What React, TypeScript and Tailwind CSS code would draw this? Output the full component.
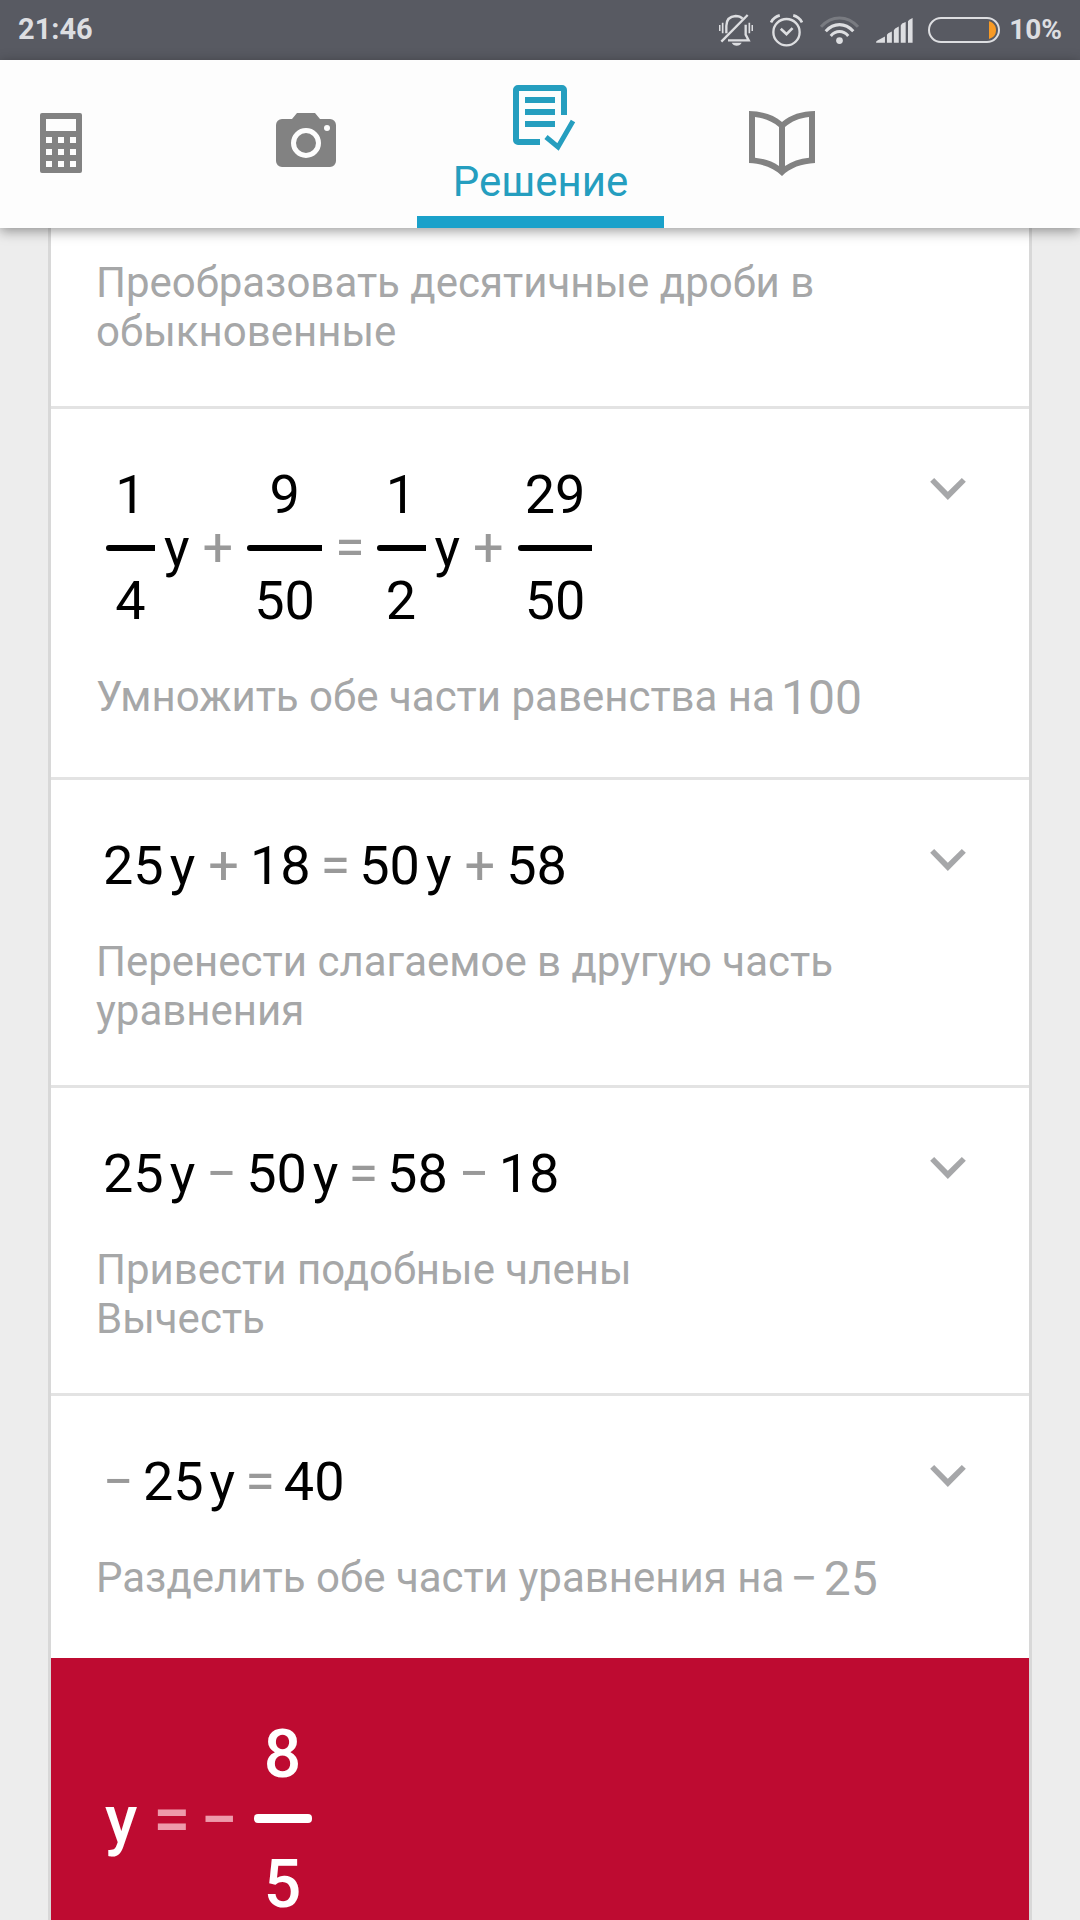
import type { ReactNode } from "react";

const tabs = [
  { id: "calculator", label: "Калькулятор", icon: CalculatorIcon, className: "w-[195px] pl-10" },
  { id: "camera", label: "Камера", icon: CameraIcon, className: "w-[222px] justify-center" },
  { id: "solution", label: "Решение", icon: SolutionIcon, className: "w-[247px] justify-center" },
  { id: "book", label: "Учебник", icon: BookIcon, className: "w-[236px] justify-center" },
];

function BellOffIcon() {
  return (
    <svg viewBox="57 40 102 96" className="h-8 w-[34px]" fill="none" stroke="currentColor" strokeWidth="7" aria-hidden="true">
      <path d="M79 98V76c0-18 10-29 28-30 9 0 16 3 21 8M137 72v30l9 17H84" />
      <path d="M64 123 143 43" strokeWidth="7" />
      <path d="M59 73v18M68 66v32M157 73v18M148 66v32" strokeWidth="5" />
      <path d="M95 126h30c-3 6-8 9-15 9s-12-3-15-9z" fill="currentColor" stroke="none" />
    </svg>
  );
}

function AlarmIcon() {
  return (
    <svg viewBox="209 38 98 98" className="h-[33px] w-[33px]" fill="none" stroke="currentColor" strokeWidth="7" aria-hidden="true">
      <circle cx="258" cy="92" r="39" />
      <path d="m241 82 17 16 18-18" strokeWidth="8" />
      <path d="M212 63c5-10 14-18 26-21M304 63c-5-10-14-18-26-21" strokeWidth="8" />
    </svg>
  );
}

function WifiIcon() {
  return (
    <svg viewBox="359 47 116 83" className="h-7 w-[39px]" fill="none" stroke="currentColor" strokeWidth="9" aria-hidden="true">
      <path d="M362 79c32-35 78-35 110 0" opacity="0.25" />
      <path d="M376 92c24-26 58-26 82 0" />
      <path d="M391 106c15-17 37-17 52 0" />
      <circle cx="417" cy="120" r="10" fill="currentColor" stroke="none" />
    </svg>
  );
}

function SignalIcon() {
  return (
    <svg viewBox="528 54 112 76" className="h-[25px] w-[37px]" fill="currentColor" aria-hidden="true">
      <path d="M528 129c0-5 3-6 7-8l20-11v19zM561 129v-24l4-5 11-5v34zM582 129V91l4-5 11-6v49zM603 129V77l4-6 11-5v63zM625 129V64l4-5 10-5v75z" />
    </svg>
  );
}

function BatteryIcon() {
  return (
    <svg viewBox="684 51 216 78" className="h-[26px] w-[72px]" aria-hidden="true">
      <rect x="687" y="54" width="210" height="72" rx="36" fill="none" stroke="currentColor" strokeWidth="6" />
      <path d="M867 64c14 4 21 14 21 27s-7 22-21 26z" fill="#f79a25" />
    </svg>
  );
}

function CalculatorIcon() {
  return (
    <svg viewBox="0 0 42 60" className="h-[60px] w-[42px]" aria-hidden="true">
      <path
        fill="currentColor"
        fillRule="evenodd"
        d="M2 0h38a2 2 0 0 1 2 2v56a2 2 0 0 1-2 2H2a2 2 0 0 1-2-2V2a2 2 0 0 1 2-2zM6 6v12h30V6zM6 24v6h6v-6zM18 24v6h6v-6zM30 24v6h6v-6zM6 36v6h6v-6zM18 36v6h6v-6zM30 36v6h6v-6zM6 48v6h6v-6zM18 48v6h6v-6zM30 48v6h6v-6z"
      />
    </svg>
  );
}

function CameraIcon() {
  return (
    <svg viewBox="0 0 60 60" className="h-[60px] w-[60px]" aria-hidden="true">
      <path fill="currentColor" d="M6 6h10l5-6h18l5 6h10a6 6 0 0 1 6 6v36a6 6 0 0 1-6 6H6a6 6 0 0 1-6-6V12a6 6 0 0 1 6-6z" />
      <circle cx="30" cy="30" r="12.5" fill="none" stroke="#fdfdfd" strokeWidth="5" />
      <circle cx="51" cy="15" r="3" fill="#fdfdfd" />
    </svg>
  );
}

function SolutionIcon() {
  return (
    <svg viewBox="0 0 55 66" className="h-[66px] w-[55px] overflow-visible" fill="none" stroke="currentColor" strokeWidth="6" aria-hidden="true">
      <path d="M27 57H5a2 2 0 0 1-2-2V5a2 2 0 0 1 2-2h44a2 2 0 0 1 2 2v25" />
      <path d="M12 15h30M12 27h30M12 39h30" />
      <path d="m33 52 12 10 15-26" strokeWidth="5" />
    </svg>
  );
}

function BookIcon() {
  return (
    <svg viewBox="147 330 198 195" className="h-[65px] w-[66px]" aria-hidden="true">
      <path
        fill="currentColor"
        fillRule="evenodd"
        d="M147 330c40 1 74 11 99 33 25-22 59-32 99-33v156c-40 2-74 14-99 39-25-25-59-37-99-39zM165 348v122c28 3 52 11 72 25V378c-20-17-44-27-72-30zM327 348v122c-28 3-52 11-72 25V378c20-17 44-27 72-30z"
      />
    </svg>
  );
}

function ExpandButton() {
  return (
    <button type="button" aria-label="Показать подробности" className="shrink-0 px-[18px] py-[15px] text-[#a6a7a9]">
      <svg viewBox="931 114 107 66" className="h-[22px] w-[36px]" fill="currentColor" aria-hidden="true">
        <path d="m931 125 12-11 41 41 42-41 12 11-54 55z" />
      </svg>
    </button>
  );
}

function Plus() {
  return <span className="mr-[11px] ml-[13px] text-[#999999]">+</span>;
}

function Minus() {
  return <span className="mr-[9px] ml-[11px] text-[#999999] first:ml-0">−</span>;
}

function Equals() {
  return <span className="mr-[9px] ml-[10px] text-[#999999]">=</span>;
}

function Var({ children }: { children: string }) {
  return <span className="ml-1.5">{children}</span>;
}

function Fraction({ top, bottom }: { top: string; bottom: string }) {
  return (
    <span className="mx-[3px] flex min-w-[49px] flex-col items-stretch text-center">
      <span className="px-[7px]">{top}</span>
      <span className="my-[18px] h-[6px] rounded-l-sm bg-black" />
      <span className="px-[7px]">{bottom}</span>
    </span>
  );
}

function Step({ equation, children }: { equation: ReactNode; children: ReactNode }) {
  return (
    <li className="border-t-[3px] border-[#e3e3e3] px-[45px] pt-[54px] pb-[50px]">
      <div className="mb-[39px] flex items-start justify-between">
        <div className="flex items-center pl-[7px] text-[54px] leading-[64px] text-black">{equation}</div>
        <ExpandButton />
      </div>
      {children}
    </li>
  );
}

function Hint({ children, value }: { children: ReactNode; value?: ReactNode }) {
  if (!value) {
    return <p className="text-[42px] leading-[49px]">{children}</p>;
  }
  return (
    <p className="flex min-h-[55px] items-start gap-1.5 text-[42px] leading-[49px]">
      <span>{children}</span>
      <span className="flex gap-1.5 text-[48px] leading-[52px]">{value}</span>
    </p>
  );
}

export default function App() {
  return (
    <div className="flex h-screen flex-col overflow-hidden bg-[#ededed] font-['Roboto',sans-serif]">
      {/* Status bar */}
      <div className="flex h-[60px] shrink-0 items-center justify-between bg-[#585a62] px-[18px] text-[#dddee1]">
        <span className="text-[29px] font-bold">21:46</span>
        <div className="flex items-center gap-[15px]">
          <div className="flex items-center gap-[17px]">
            <BellOffIcon />
            <AlarmIcon />
            <WifiIcon />
            <SignalIcon />
          </div>
          <div className="flex items-center gap-[9px]">
            <BatteryIcon />
            <span className="text-[28px] font-bold">10%</span>
          </div>
        </div>
      </div>

      {/* Tabs */}
      <nav className="relative z-10 flex h-[168px] shrink-0 bg-[#fdfdfd] shadow-[0_3px_12px_rgba(0,0,0,0.4)]">
        {tabs.map((tab) =>
          tab.id === "solution" ? (
            <button key={tab.id} type="button" aria-current="page" className="flex w-[247px] flex-col items-center justify-between text-[#259ebf]">
              <span className="flex flex-col items-center gap-1.5 pt-[25px]">
                <tab.icon />
                <span className="text-[42px] leading-[49px]">{tab.label}</span>
              </span>
              <span className="h-3 w-full bg-[#1aa1ca]" />
            </button>
          ) : (
            <button key={tab.id} type="button" aria-label={tab.label} className={`flex items-center pb-0.5 text-[#828282] ${tab.className}`}>
              <tab.icon />
            </button>
          )
        )}
      </nav>

      {/* Solution steps */}
      <main className="min-h-0 flex-1 overflow-hidden px-12">
        <ol className="border-x-[3px] border-[#d8d8d8] bg-white text-[#a6a7a8]">
          <li className="px-[45px] pt-[30px] pb-[50px]">
            <Hint>Преобразовать десятичные дроби в обыкновенные</Hint>
          </li>

          <Step
            equation={
              <>
                <Fraction top="1" bottom="4" />
                <Var>y</Var>
                <Plus />
                <Fraction top="9" bottom="50" />
                <Equals />
                <Fraction top="1" bottom="2" />
                <Var>y</Var>
                <Plus />
                <Fraction top="29" bottom="50" />
              </>
            }
          >
            <Hint value="100">Умножить обе части равенства на</Hint>
          </Step>

          <Step
            equation={
              <>
                <span>25</span>
                <Var>y</Var>
                <Plus />
                <span>18</span>
                <Equals />
                <span>50</span>
                <Var>y</Var>
                <Plus />
                <span>58</span>
              </>
            }
          >
            <Hint>Перенести слагаемое в другую часть уравнения</Hint>
          </Step>

          <Step
            equation={
              <>
                <span>25</span>
                <Var>y</Var>
                <Minus />
                <span>50</span>
                <Var>y</Var>
                <Equals />
                <span>58</span>
                <Minus />
                <span>18</span>
              </>
            }
          >
            <Hint>
              Привести подобные члены
              <br />
              Вычесть
            </Hint>
          </Step>

          <Step
            equation={
              <>
                <Minus />
                <span>25</span>
                <Var>y</Var>
                <Equals />
                <span>40</span>
              </>
            }
          >
            <Hint
              value={
                <>
                  <span>−</span>
                  <span>25</span>
                </>
              }
            >
              Разделить обе части уравнения на
            </Hint>
          </Step>

          {/* Answer */}
          <li className="flex items-center bg-[#be0b31] px-[54px] pt-[62px] pb-[60px] text-[66px] leading-[70px] font-medium text-white">
            <span>y</span>
            <span className="mr-[10px] ml-4 text-[#ee9aab]">=</span>
            <span className="mr-4 text-[#ee9aab]">−</span>
            <span className="flex min-w-[58px] flex-col text-center">
              <span>8</span>
              <span className="mt-6 mb-[27px] h-[9px] rounded-sm bg-white" />
              <span>5</span>
            </span>
          </li>
        </ol>
      </main>
    </div>
  );
}
